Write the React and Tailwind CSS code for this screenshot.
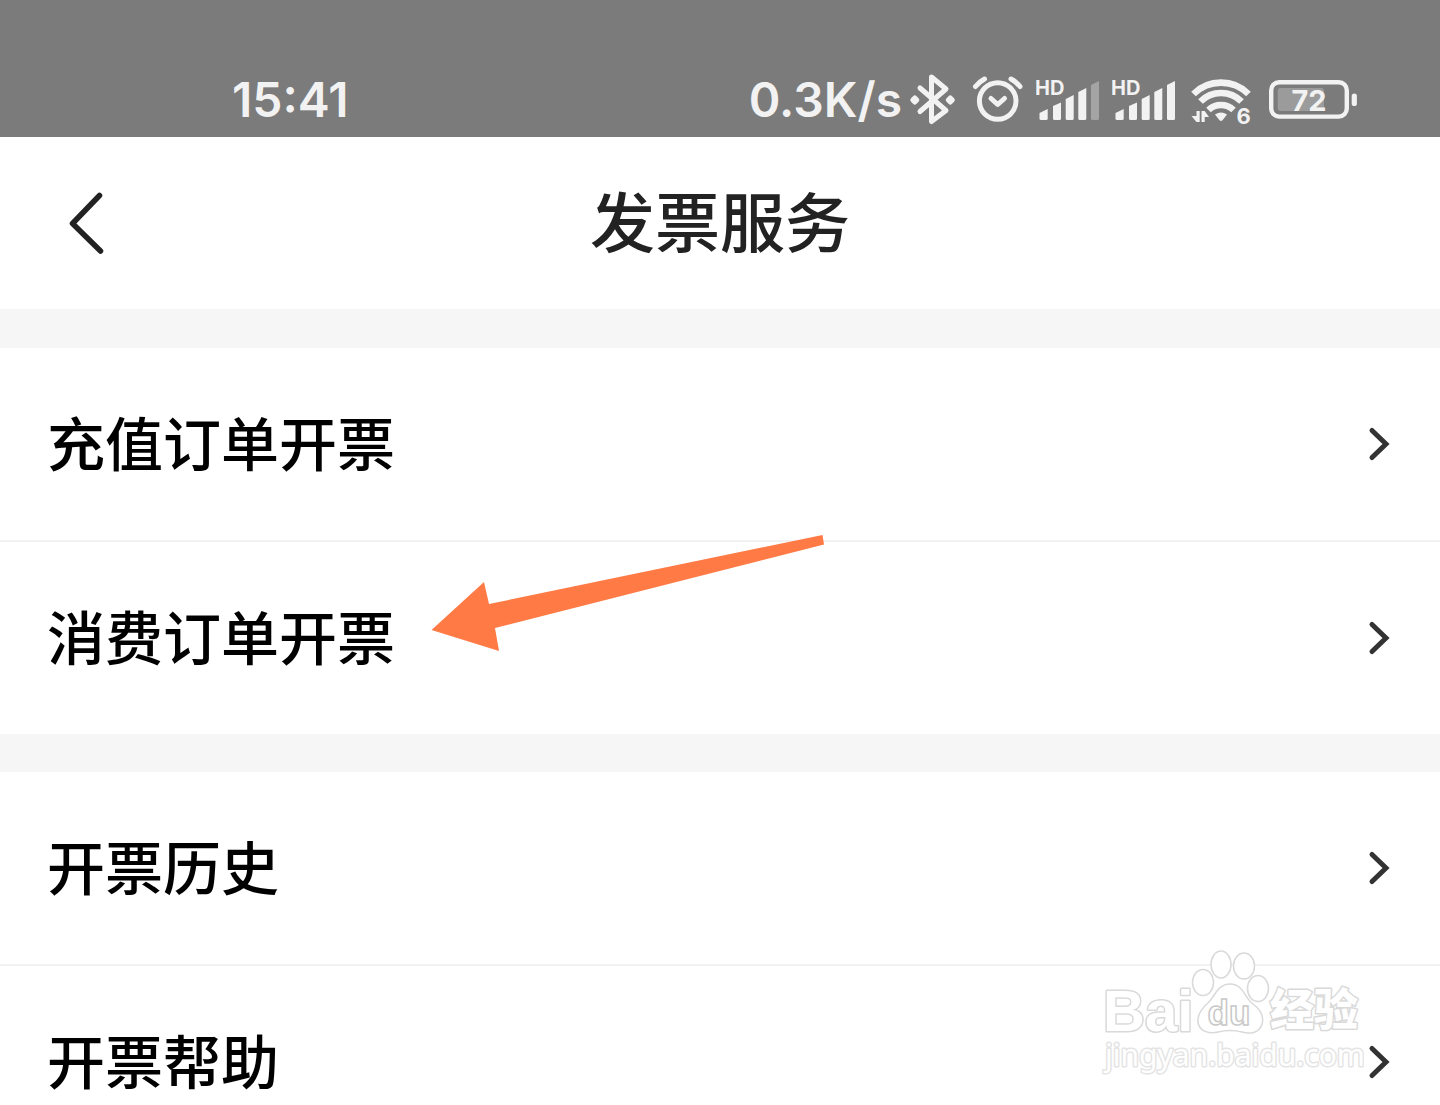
const invoiceMenu = [
    [
        { id: "recharge", label: "充值订单开票" },
        { id: "consume", label: "消费订单开票", marked: true },
    ],
    [
        { id: "history", label: "开票历史" },
        { id: "help", label: "开票帮助" },
    ],
];

function BluetoothIcon() {
    return (
        <svg width="52" height="60" viewBox="0 0 52 60" fill="none" stroke="currentColor" strokeWidth="5" strokeLinecap="round" strokeLinejoin="round">
            <path d="M12 18 38 40.5 23.5 51.5V7L38 19 12 41.5" />
            <path d="M6.8 28 8.8 30 6.8 32 4.8 30ZM42.3 28 44.3 30 42.3 32 40.3 30Z" />
        </svg>
    );
}

function AlarmIcon() {
    return (
        <svg width="52" height="60" viewBox="0 0 52 60" fill="none" stroke="currentColor" strokeWidth="5" strokeLinecap="round" strokeLinejoin="round">
            <circle cx="25.7" cy="31" r="18.3" />
            <path d="M19 28.5 25.7 34.5 32.5 28.5" />
            <path d="M3.5 16.5A28 28 0 0 1 12.5 9M48 16.5A28 28 0 0 0 39 9" />
        </svg>
    );
}

function SignalIcon({ weak }) {
    return (
        <svg width="64" height="60" viewBox="0 0 64 60" fill="currentColor">
            <text x="-1" y="25" fontSize="20" fontWeight="700">HD</text>
            <path d="M3.5 43 11.7 39V48.5Q11.7 50 10.2 50H5Q3.5 50 3.5 48.5Z" />
            <path d="M17 36 25 32.5V48.5Q25 50 23.5 50H18.5Q17 50 17 48.5Z" />
            <path d="M29.7 29 37.7 25V48.5Q37.7 50 36.2 50H31.2Q29.7 50 29.7 48.5Z" />
            <path d="M42.3 22 50.3 18V48.5Q50.3 50 48.8 50H43.8Q42.3 50 42.3 48.5Z" />
            <path opacity={weak ? 0.35 : 1} d="M55 15 63 11V48.5Q63 50 61.5 50H56.5Q55 50 55 48.5Z" />
        </svg>
    );
}

function WifiIcon() {
    return (
        <svg width="68" height="60" viewBox="0 0 68 60" fill="none" stroke="currentColor">
            <path strokeWidth="6.6" d="M5.5 24A39 39 0 0 1 60.5 24" />
            <path strokeWidth="6.6" d="M12.5 31.5A29 29 0 0 1 53.5 31.5" />
            <path strokeWidth="6.6" d="M20.5 40A18 18 0 0 1 45.5 40" />
            <path fill="currentColor" stroke="none" d="M27 44.5Q33 40.5 39 44.5L34.5 50.3Q33 51.8 31.5 50.3Z" />
            <path fill="currentColor" stroke="none" d="M8.5 41H11.7V52H8.5L3.5 46H8.5ZM13.5 52V41H16.7L21 47H16.7V52Z" />
            <text x="48.5" y="53.5" fontSize="22" fontWeight="700" fill="currentColor" stroke="none">6</text>
        </svg>
    );
}

function BatteryIcon() {
    return (
        <svg width="90" height="60" viewBox="0 0 90 60" fill="currentColor">
            <rect x="3.2" y="12.2" width="75.6" height="34.4" rx="8" fill="none" stroke="currentColor" strokeWidth="4.4" />
            <rect x="9.7" y="18" width="46.3" height="23" rx="3" fill="#9b9b9b" />
            <text x="41" y="41" fontSize="29" fontWeight="700" textAnchor="middle">72</text>
            <rect x="83.7" y="23.5" width="5.2" height="12.5" rx="2.6" />
        </svg>
    );
}

function StatusBar() {
    return (
        <div className="flex items-center justify-between bg-[#7b7b7b] pt-[63px] pr-[82px] pl-[232px] font-['Inter','Noto_Sans_CJK_SC',sans-serif] text-[48px] leading-[74px] font-semibold text-[#f2f2f2]">
            <span>15:41</span>
            <div className="flex items-center gap-3">
                <div className="flex items-center gap-1.5">
                    <span>0.3K/s</span>
                    <BluetoothIcon />
                </div>
                <AlarmIcon />
                <SignalIcon weak />
                <SignalIcon />
                <WifiIcon />
                <BatteryIcon />
            </div>
        </div>
    );
}

function PageHeader() {
    return (
        <header className="grid grid-cols-[1fr_auto_1fr] items-center bg-white px-16 py-11">
            <button type="button" aria-label="返回" className="justify-self-start">
                <svg width="44" height="68" viewBox="0 0 44 68" fill="none" stroke="#222" strokeWidth="5.5" strokeLinecap="round" strokeLinejoin="round">
                    <path d="M35.5 6.5 8.5 34.5 36.5 62" />
                </svg>
            </button>
            <h1 className="pb-2 text-[65px] leading-[76px] font-medium text-[#222]">发票服务</h1>
        </header>
    );
}

function PointerArrow() {
    return (
        <svg className="absolute -top-[8px] left-[431px]" width="394" height="118" viewBox="0 0 394 118" aria-hidden="true">
            <path fill="#ff7a45" d="M0.5 96 53 48 58 70 391.5 1 393 10.5 64 94 68 117Z" />
        </svg>
    );
}

function MenuRow({ label, marked }) {
    return (
        <li className="relative border-b-2 border-[#f2f2f2] last:border-b-0">
            <a href="#" className="flex items-center justify-between py-14 pr-[49px] pl-[47px]">
                <span className="pb-1.5 text-[58px] leading-[74px] font-medium text-black">{label}</span>
                <svg width="26" height="40" viewBox="0 0 26 40" fill="none" stroke="#333" strokeWidth="5" strokeLinecap="round" strokeLinejoin="miter">
                    <path d="M7 6.5 21 20 7 33.5" />
                </svg>
            </a>
            {marked && <PointerArrow />}
        </li>
    );
}

function Watermark() {
    return (
        <svg className="pointer-events-none absolute right-[76px] bottom-[28px]" width="262" height="130" viewBox="0 0 262 130" fill="#fff" stroke="#d9d9d9" strokeWidth="1.5" aria-hidden="true">
            <g strokeWidth="3" paintOrder="stroke" strokeLinejoin="round">
                <text x="1" y="84" fontSize="58" fontWeight="700" fontFamily="Liberation Sans">Bai</text>
                <text x="168" y="79" fontSize="44" fontWeight="900">经验</text>
                <text x="3" y="119" fontSize="30" fontFamily="Noto Sans" stroke="#e4e4e4">jingyan.baidu.com</text>
            </g>
            <ellipse cx="101" cy="35.5" rx="10.5" ry="13" />
            <ellipse cx="119" cy="17.5" rx="10" ry="13.5" />
            <ellipse cx="142" cy="19" rx="10.5" ry="13" />
            <ellipse cx="156" cy="41.5" rx="10.5" ry="13" />
            <path d="M128 37C141 37 142 50 151 57C159 63 162 70 160 77C157 87 147 87 140 85Q128 82 116 85C108 87 98 85 96 76C95 68 99 62 106 56C113 49 116 37 128 37Z" />
            <text x="127" y="78" fontSize="35" fontWeight="700" textAnchor="middle" fontFamily="Liberation Sans" stroke="#c8c8c8">du</text>
        </svg>
    );
}

export default function App() {
    return (
        <div className="relative h-screen overflow-hidden bg-[#f6f6f6] font-['Noto_Sans_CJK_SC',sans-serif]">
            <StatusBar />
            <PageHeader />
            <main className="flex flex-col gap-[38px] pt-[39px]">
                {invoiceMenu.map((group) => (
                    <ul key={group[0].id} className="bg-white">
                        {group.map((item) => (
                            <MenuRow key={item.id} label={item.label} marked={item.marked} />
                        ))}
                    </ul>
                ))}
            </main>
            <Watermark />
        </div>
    );
}
